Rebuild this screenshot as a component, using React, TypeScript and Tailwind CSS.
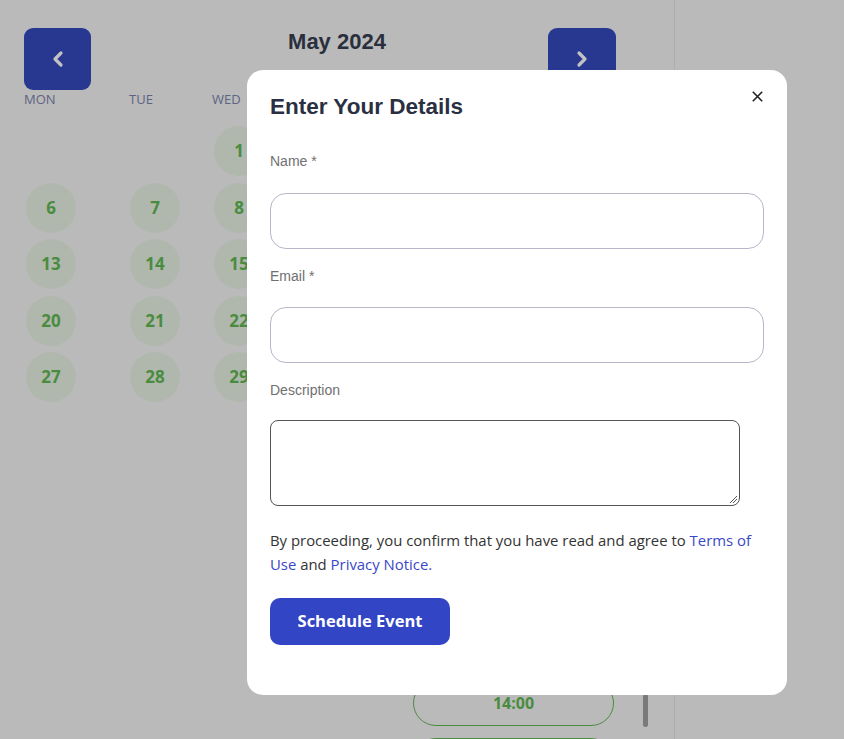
import React from "react";

const rows: (number | null)[][] = [
  [null, null, 1],
  [6, 7, 8],
  [13, 14, 15],
  [20, 21, 22],
  [27, 28, 29],
];

function Chevron({ dir }: { dir: "left" | "right" }) {
  return (
    <svg width="14" height="18" viewBox="0 0 14 18" fill="none">
      {dir === "left" ? (
        <path d="M10 3 L4 9 L10 15" stroke="#c2c2c4" strokeWidth="3.2" strokeLinecap="round" strokeLinejoin="round" />
      ) : (
        <path d="M4 3 L10 9 L4 15" stroke="#c2c2c4" strokeWidth="3.2" strokeLinecap="round" strokeLinejoin="round" />
      )}
    </svg>
  );
}

export default function App() {
  return (
    <div className="relative w-[844px] h-[739px] overflow-hidden bg-[#bababa]" style={{ fontFamily: "'Liberation Sans', Arial, sans-serif" }}>
      {/* underlying page */}
      <div className="flex h-full">
        <div className="relative w-[675px] h-full border-r border-[#adadad]">
          <div className="grid grid-cols-[1fr_auto_1fr] items-start pt-7">
            <div className="pl-6">
              <div className="w-[67px] h-[62px] rounded-[9px] bg-[#283891] flex items-center justify-center">
                <Chevron dir="left" />
              </div>
            </div>
            <div className="pt-[1px] text-[22px] font-bold text-[#2a2f3d] leading-[26px]">May 2024</div>
            <div className="flex justify-end pr-[58px]">
              <div className="w-[68px] h-[62px] rounded-[9px] bg-[#283891] flex items-center justify-center">
                <Chevron dir="right" />
              </div>
            </div>
          </div>
          <div className="pl-6" style={{ fontFamily: "'Open Sans', 'Noto Sans', sans-serif" }}>
            <div className="grid grid-cols-[105px_83px_83px] text-[13px] leading-[18px] text-[#5c6383] mt-0">
              <div>MON</div>
              <div>TUE</div>
              <div>WED</div>
            </div>
            <div className="mt-[18px] flex flex-col gap-[6.5px]">
              {rows.map((r, i) => (
                <div key={i} className="grid grid-cols-[105px_85px_83px] h-[50px]">
                  {r.map((d, j) => (
                    <div key={j} className={j === 0 ? "pl-[2px]" : j === 1 ? "pl-[1px]" : "pl-0"}>
                      {d !== null && (
                        <div className="w-[50px] h-[50px] rounded-full bg-[#b0b8ad] flex items-center justify-center text-[17px] font-bold text-[#4a8c3f]">
                          {d}
                        </div>
                      )}
                    </div>
                  ))}
                </div>
              ))}
            </div>
          </div>
          <div className="flex mt-[278px] pl-[413px]">
            <div className="flex flex-col gap-3">
              <div className="w-[201px] h-[46px] rounded-full border border-[#4a8c3f] flex items-center justify-center text-[16px] font-bold text-[#4a8c3f]" style={{ fontFamily: "'Open Sans', sans-serif" }}>
                14:00
              </div>
              <div className="w-[201px] h-[46px] rounded-full border border-[#4a8c3f]" />
            </div>
            <div className="ml-[29px] mt-[14px] w-[5px] h-[33px] rounded-full bg-[#7a7a7a]" />
          </div>
        </div>
      </div>

      {/* modal */}
      <div className="absolute left-[247px] top-[70px] w-[540px] h-[625px] bg-white rounded-[16px] px-[23px] pt-[24px]">
        <div className="flex items-start justify-between">
          <h2 className="text-[22.5px] font-bold text-[#2a3042] leading-[26px]">Enter Your Details</h2>
          <svg className="mt-[-3px] mr-[1px]" width="11" height="11" viewBox="0 0 11 11">
            <path d="M0.8 0.8 L10.2 10.2 M10.2 0.8 L0.8 10.2" stroke="#222" strokeWidth="1.6" />
          </svg>
        </div>
        <div className="mt-[32px] text-[14px] leading-[18px] text-[#707070]">Name *</div>
        <div className="mt-[23px] h-[56px] rounded-[16px] border border-[#b8b6c8]" />
        <div className="mt-[18px] text-[14px] leading-[18px] text-[#707070]">Email *</div>
        <div className="mt-[22px] h-[56px] rounded-[16px] border border-[#b8b6c8]" />
        <div className="mt-[18px] text-[14px] leading-[18px] text-[#707070]">Description</div>
        <div className="relative mt-[21px] w-[470px] h-[86px] rounded-[8px] border border-[#555]">
          <svg className="absolute right-[1px] bottom-[1px]" width="10" height="10" viewBox="0 0 10 10">
            <path d="M9 2 L2 9 M9 5 L5 9" stroke="#555" strokeWidth="1" />
          </svg>
        </div>
        <p className="mt-[22px] text-[14.9px] leading-[24px] text-[#333]" style={{ fontFamily: "'Open Sans', 'Noto Sans', sans-serif" }}>
          By proceeding, you confirm that you have read and agree to <span className="text-[#3a48c8]">Terms of Use</span> and{" "}
          <span className="text-[#3a48c8]">Privacy Notice.</span>
        </p>
        <button className="mt-[22px] w-[180px] h-[47px] rounded-[10px] bg-[#3245c5] text-white text-[16.5px] font-bold" style={{ fontFamily: "'Open Sans', 'Noto Sans', sans-serif" }}>
          Schedule Event
        </button>
      </div>
    </div>
  );
}
